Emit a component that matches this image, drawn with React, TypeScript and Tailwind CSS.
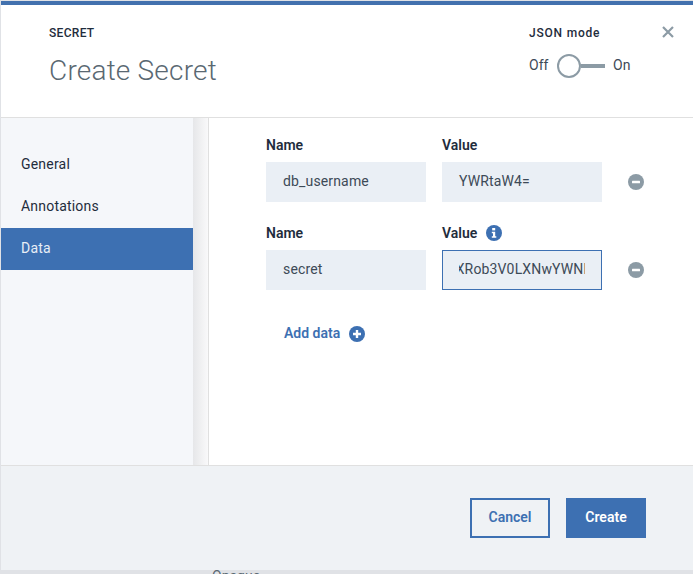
const fontStack = "font-['Roboto','Liberation_Sans',sans-serif]"

function MinusIcon() {
  return (
    <svg width="16" height="16" viewBox="0 0 16 16" className="shrink-0">
      <circle cx="8" cy="8" r="8" fill="#8c9ba5" />
      <rect x="4" y="6.75" width="8" height="2.5" rx="0.5" fill="#fff" />
    </svg>
  )
}

function Field({ label, value, info, active }: { label: string; value: string; info?: boolean; active?: boolean }) {
  return (
    <div className="w-40">
      <div className="flex h-[18px] items-center gap-[9px] text-[14px] leading-[18px] font-semibold text-[#1f2d3d]">
        {label}
        {info && (
          <svg width="16" height="16" viewBox="0 0 16 16">
            <circle cx="8" cy="8" r="8" fill="#3d70b2" />
            <rect x="6.2" y="3" width="3" height="2.4" fill="#fff" />
            <path d="M5.8 6.8h3.4v4.4h1.1v1.5H5.8v-1.5h1.2V8.3H5.8z" fill="#fff" />
          </svg>
        )}
      </div>
      {active ? (
        <div className="mt-[8px] flex h-10 items-center border border-[#3d70b2] bg-[#eaeff5] pb-[2px] pl-4 text-[14px] tracking-[0.15px] text-[#3d4a57]">
          <div className="flex w-[126px] justify-end overflow-hidden whitespace-nowrap">
            <span className="-mr-[2px] shrink-0">{value}</span>
          </div>
        </div>
      ) : (
        <div className="mt-[8px] flex h-10 items-center bg-[#eaeff5] pb-[2px] pl-[17px] text-[14px] tracking-[0.15px] text-[#3d4a57]">
          {value}
        </div>
      )}
    </div>
  )
}

export default function App() {
  return (
    <div className={`h-[574px] w-[693px] overflow-hidden bg-[#e0e2e6] pt-px pl-px ${fontStack}`}>
      <div className="flex h-[569px] w-[692px] flex-col bg-white">
        <div className="h-1 bg-[#4271ae]" />

        <header className="flex h-[113px] shrink-0 justify-between border-b border-[#e0e0e0] pt-[20px] pr-[19px] pl-[48px]">
          <div>
            <div className="text-[12px] leading-[16px] font-medium tracking-[0.3px] text-[#1f2d3d]">SECRET</div>
            <h1 className="mt-[12px] text-[28px] leading-[36px] font-light tracking-[0.2px] text-[#5a6872]">Create Secret</h1>
          </div>
          <div className="flex">
            <div className="mr-[31px]">
              <div className="text-[12px] leading-[16px] font-medium tracking-[0.8px] text-[#1f2d3d]">JSON mode</div>
              <div className="mt-[13px] flex w-[102px] items-center text-[14px] text-[#3d4a57]">
                <span className="w-[28px] pb-[2px]">Off</span>
                <div className="flex items-center">
                  <div className="h-[24px] w-[24px] rounded-full border-2 border-[#8c9ba5] bg-white" />
                  <div className="h-[4px] w-[24px] bg-[#8c9ba5]" />
                </div>
                <span className="ml-[8px] pb-[2px]">On</span>
              </div>
            </div>
            <svg width="12" height="12" viewBox="0 0 12 12" className="mt-[1px]">
              <path d="M1 1l10 10M11 1L1 11" stroke="#8c9ba5" strokeWidth="2.2" />
            </svg>
          </div>
        </header>

        <div className="flex min-h-0 flex-1">
          <nav className="w-[192px] shrink-0 bg-[#f5f7fa] pt-[26px] text-[14px] tracking-[0.2px] text-[#1f2d3d]">
            <div className="flex h-[42px] items-center pb-[2px] pl-[20px]">General</div>
            <div className="flex h-[42px] items-center pb-[2px] pl-[20px]">Annotations</div>
            <div className="flex h-[42px] items-center bg-[#3d70b2] pb-[2px] pl-[20px] text-[#e8eef6]">Data</div>
          </nav>
          <div className="w-4 shrink-0 border-r border-[#e0e0e0] bg-gradient-to-r from-[#e6e7e9] to-[#f9f9fa]" />

          <main className="flex-1 pt-[18px] pl-[57px]">
            <div className="flex items-end">
              <Field label="Name" value="db_username" />
              <div className="w-4" />
              <Field label="Value" value="YWRtaW4=" />
              <div className="mb-[12px] ml-[26px]">
                <MinusIcon />
              </div>
            </div>
            <div className="mt-[22px] flex items-end">
              <Field label="Name" value="secret" />
              <div className="w-4" />
              <Field label="Value" value="dXRob3V0LXNwYWNl" info active />
              <div className="mb-[12px] ml-[26px]">
                <MinusIcon />
              </div>
            </div>
            <button className="mt-[33px] ml-[18px] flex items-center gap-[9px] text-[14px] font-semibold text-[#3d70b2]">
              Add data
              <svg width="16" height="16" viewBox="0 0 16 16">
                <circle cx="8" cy="8" r="8" fill="#3d70b2" />
                <path d="M8 4v8M4 8h8" stroke="#fff" strokeWidth="2.4" />
              </svg>
            </button>
          </main>
        </div>

        <footer className="flex h-[105px] shrink-0 items-center justify-end gap-4 border-t border-[#e0e0e0] bg-[#eff2f5] pr-[47px]">
          <button className="h-10 w-20 border-2 border-[#3d70b2] pb-[2px] text-[14px] font-semibold text-[#3d70b2]">Cancel</button>
          <button className="h-10 w-20 bg-[#3d70b2] pb-[2px] text-[14px] font-semibold text-white">Create</button>
        </footer>
      </div>
      <div className="pl-[211px] text-[14px] leading-[12px] text-[#5a6872]">Opaque</div>
    </div>
  )
}
